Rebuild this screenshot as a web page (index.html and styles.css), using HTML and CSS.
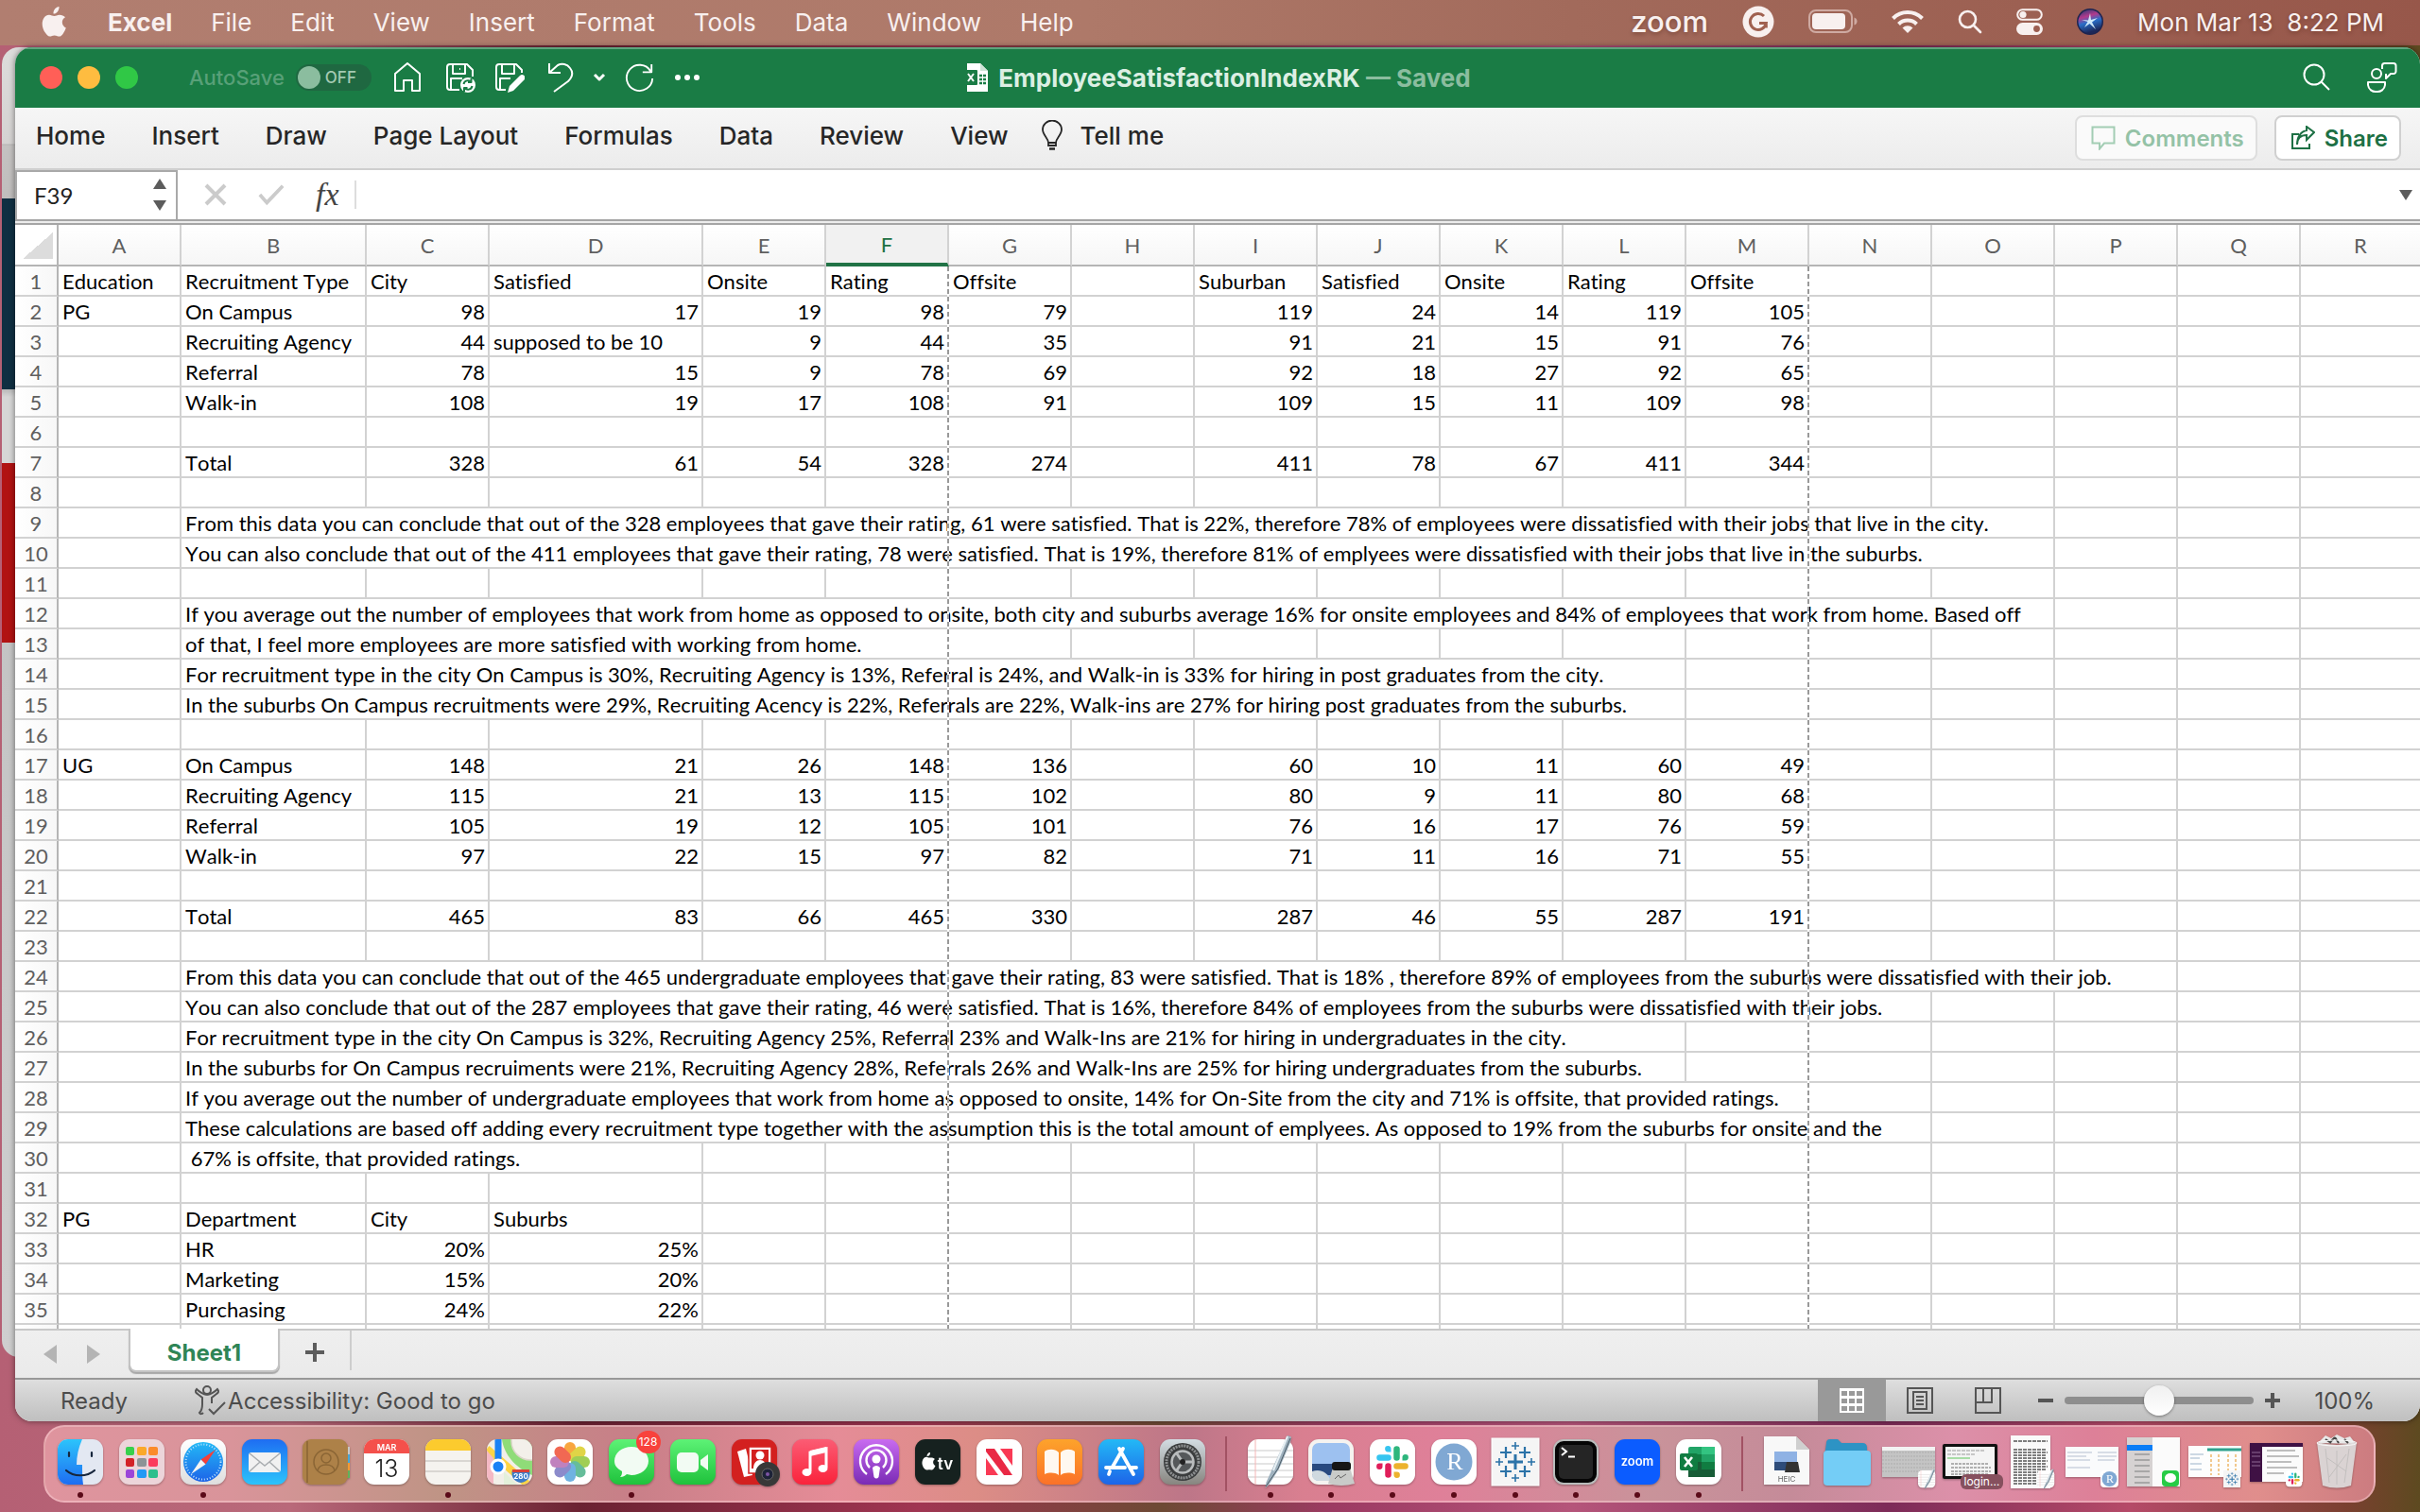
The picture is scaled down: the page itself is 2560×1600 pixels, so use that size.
FILE: index.html
```
<!DOCTYPE html>
<html lang="en">
<head>
<meta charset="utf-8">
<title>EmployeeSatisfactionIndexRK</title>
<link rel="stylesheet" href="styles.css">
</head>
<body>
<header class="menubar">
  <nav class="menus">
    <button class="apple" aria-label="Apple menu"><svg width="26" height="32" viewBox="0 0 26 32"><path fill="#f8f0ef" d="M18.500 0c.2 2.200-.6 4-1.700 5.400-1.100 1.300-2.700 2.200-4.300 2-.2-2 .7-3.900 1.700-5.100C15.300 1 17 .1 18.500 0zM25 11.200c-2 1.200-3.200 3-3.200 5.400 0 2.700 1.600 4.900 4 5.900-.6 1.900-1.500 3.700-2.700 5.400-1.300 1.900-2.500 3.700-4.600 3.700-2 0-2.600-1.200-4.900-1.200s-3 1.200-4.900 1.200c-2 0-3.500-2-4.700-3.800C.7 23.500-.4 17.200 2 12.700 3.300 10.300 5.600 8.800 8 8.800c2.200 0 3.700 1.300 5.500 1.300 1.700 0 2.900-1.300 5.500-1.300 2.300 0 4.600.9 6 2.400z"/></svg></button>
    <button class="app">Excel</button><button>File</button><button>Edit</button><button>View</button><button>Insert</button><button>Format</button><button>Tools</button><button>Data</button><button>Window</button><button>Help</button>
  </nav>
  <div class="status-items">
    <span class="zoomword">zoom</span>
    <svg width="34" height="34" viewBox="0 0 34 34"><circle cx="17" cy="17" r="16.500" fill="#f8f0ef"/><path d="M23 11a8.500 8.500 0 1 0 2.300 7.500H18M25.300 18.500v5" fill="none" stroke="#a0604f" stroke-width="3"/></svg>
    <svg width="52" height="26" viewBox="0 0 52 26"><rect x="1" y="1" width="45" height="23" rx="7" fill="none" stroke="#cfaaa2" stroke-width="2"/><rect x="4" y="4" width="35" height="17" rx="4" fill="#f8f0ef"/><path d="M48.500 8.500q3 1 3 4t-3 4z" fill="#cfaaa2"/></svg>
    <svg width="34" height="26" viewBox="0 0 34 26"><g fill="none" stroke="#f8f0ef" stroke-width="4"><path d="M1.500 9.500a22 22 0 0 1 31 0"/><path d="M7.500 15.500a13.500 13.500 0 0 1 19 0"/></g><path d="M17 25l-5.500-5.500a8 8 0 0 1 11 0z" fill="#f8f0ef"/></svg>
    <svg width="26" height="26" viewBox="0 0 26 26"><g fill="none" stroke="#f8f0ef" stroke-width="2.600" stroke-linecap="round"><circle cx="10.500" cy="10.500" r="8.500"/><path d="M17 17l7 7"/></g></svg>
    <svg width="28" height="28" viewBox="0 0 28 28"><rect x="1.200" y="1.200" width="25.600" height="10.600" rx="5.300" fill="none" stroke="#f8f0ef" stroke-width="2"/><circle cx="7" cy="6.500" r="3.600" fill="#f8f0ef"/><rect y="15" width="28" height="13" rx="6.500" fill="#f8f0ef"/><circle cx="21.500" cy="21.500" r="3.400" fill="#9c5d50"/></svg>
    <svg width="28" height="28" viewBox="0 0 28 28"><defs><linearGradient id="siri" x1="0" y1="0" x2="0.300" y2="1"><stop offset="0" stop-color="#283a76"/><stop offset=".35" stop-color="#b23a8c"/><stop offset=".6" stop-color="#2a6ec8"/><stop offset="1" stop-color="#1c2758"/></linearGradient></defs><circle cx="14" cy="14" r="14" fill="#1d2450"/><circle cx="14" cy="14" r="12.500" fill="url(#siri)"/><path d="M14 5l1 7 7-2-6 4.500L20 22l-6.500-6L8 20l3.500-6L5 12l7 .5z" fill="#dff6ff" opacity=".9"/></svg>
    <time>Mon Mar 13&nbsp; 8:22 PM</time>
  </div>
</header>

<main class="workspace">
  <div class="behind"></div>
  <section class="window">
    <div class="titlebar">
      <div class="lights"><button class="red" aria-label="Close"></button><button class="amber" aria-label="Minimise"></button><button class="green" aria-label="Zoom window"></button></div>
      <label class="autosave" for="autosave">AutoSave <span class="toggle"><input type="checkbox" id="autosave"><span>OFF</span></span></label>
      <div class="quick">
        <button aria-label="Home"><svg width="32" height="34" viewBox="0 0 32 34"><path d="M3 13L16 2l13 11v18h-8V20h-9v11H3z"/></svg></button>
        <button class="spaced" aria-label="Save"><svg width="32" height="34" viewBox="0 0 32 34"><path d="M15 30H5a3 3 0 0 1-3-3V6a3 3 0 0 1 3-3h18l6 6v7M8 3v10h13V3M15 8h1M6 30V18h12"/><circle cx="24" cy="25" r="8" fill="#fff" stroke="none"/><path d="M19.500 24a4.500 4.500 0 0 1 8-2M28.500 26a4.500 4.500 0 0 1-8 2M27.500 18v4h-3.500M20 32v-4h3.500" stroke="#1a7c45"/></svg></button>
        <button aria-label="Save as"><svg width="32" height="34" viewBox="0 0 32 34"><path d="M12 30H5a3 3 0 0 1-3-3V6a3 3 0 0 1 3-3h18l6 6v3M8 3v10h13V3M6 30V18h11"/><path d="M14 33l2-7 11-11a3 3 0 0 1 4.500 4.500L20 31z" fill="#fff" stroke="none"/></svg></button>
        <button class="spaced" aria-label="Undo"><svg width="28" height="34" viewBox="0 0 28 34"><path d="M2 2v10h12M2 12l9-8a10 10 0 0 1 13 3c4 5 2 10-2 14L7 32"/></svg></button>
        <button aria-label="Undo history"><svg width="14" height="10" viewBox="0 0 14 10"><path d="M2 2l5 5 5-5" stroke-width="3"/></svg></button>
        <button aria-label="Redo"><svg width="32" height="34" viewBox="0 0 34 34"><path d="M30 2v9H20M29 10A14.500 14.500 0 1 0 31 18"/></svg></button>
        <button aria-label="More"><svg width="28" height="8" viewBox="0 0 28 8"><g fill="#fff" stroke="none"><circle cx="4" cy="4" r="3"/><circle cx="14" cy="4" r="3"/><circle cx="24" cy="4" r="3"/></g></svg></button>
      </div>
      <h1 class="doc"><svg width="26" height="32" viewBox="0 0 26 32"><path d="M3 1h14l8 8v22H3z" fill="#fff"/><path d="M17 1v8h8z" fill="#cfe3d7"/><rect y="8" width="14" height="16" rx="1" fill="#1a7c45"/><path d="M4 12l6 8M10 12l-6 8" stroke="#fff" stroke-width="2"/><path d="M16 14h3M16 18h3M16 22h3M20 14h3M20 18h3M20 22h3" stroke="#1a7c45" stroke-width="2.500"/></svg><span>EmployeeSatisfactionIndexRK <span class="saved">— Saved</span></span></h1>
      <div class="title-right">
        <button aria-label="Search"><svg width="30" height="30" viewBox="0 0 30 30"><circle cx="12" cy="12" r="10.500"/><path d="M19.500 19.500L28 28"/></svg></button>
        <button aria-label="Presence"><svg width="34" height="34" viewBox="0 0 34 34"><circle cx="12" cy="13" r="5"/><path d="M3 22h18v3a8 8 0 0 1-9 7 8 8 0 0 1-9-7zM18 8V4.500A2.500 2.500 0 0 1 20.500 2H30a2.500 2.500 0 0 1 2.500 2.500v6A2.500 2.500 0 0 1 30 13h-3l-5 5v-5"/></svg></button>
      </div>
    </div>

    <nav class="ribbon">
      <button>Home</button><button>Insert</button><button>Draw</button><button>Page Layout</button><button>Formulas</button><button>Data</button><button>Review</button><button>View</button>
      <button class="tell"><svg width="24" height="32" viewBox="0 0 24 32"><g fill="none" stroke="#262626" stroke-width="1.800"><path d="M8 24c0-5-6-8-6-14a10 9.500 0 0 1 20 0c0 6-6 9-6 14zM8 24v3h8v-3"/><path d="M9 30.500h6" stroke-width="2.500"/></g></svg>Tell me</button>
      <span class="grow"></span>
      <span class="actions">
        <button class="boxed comments" disabled><svg width="26" height="26" viewBox="0 0 26 26"><path d="M1.500 1.500h23v17H14l-5 6v-6H1.500z" fill="none" stroke="#a3cdb4" stroke-width="2"/></svg>Comments</button>
        <button class="boxed"><svg width="26" height="26" viewBox="0 0 26 26"><path d="M9 9H2v15h18v-5M7 20c0-7 4-10 10-10v5l8-8-8-6v4C11 6 7 12 7 20z" fill="none" stroke="#1d7044" stroke-width="2"/></svg>Share</button>
      </span>
    </nav>

    <div class="formula">
      <div class="namebox"><input aria-label="Name box" value="F39"><span class="spin"><i class="up"></i><i class="down"></i></span></div>
      <button aria-label="Cancel"><svg width="24" height="24" viewBox="0 0 24 24"><path d="M2 2l20 20M22 2L2 22" stroke="#cbcbcb" stroke-width="4"/></svg></button>
      <button aria-label="Enter"><svg width="28" height="24" viewBox="0 0 30 24"><path d="M2 12l8 9L28 2" fill="none" stroke="#cbcbcb" stroke-width="4"/></svg></button>
      <button class="fx" aria-label="Insert function">fx</button>
      <input class="entry" aria-label="Formula">
      <i class="down"></i>
    </div>

    <div class="sheet">
      <table>
        <colgroup><col class="rh"><col><col class="cb"><col><col class="cd"><col><col><col><col><col><col><col><col><col><col><col><col><col><col class="rest"></colgroup>
        <thead><tr><th class="corner"></th><th>A</th><th>B</th><th>C</th><th>D</th><th>E</th><th class="active">F</th><th>G</th><th>H</th><th>I</th><th>J</th><th>K</th><th>L</th><th>M</th><th>N</th><th>O</th><th>P</th><th>Q</th><th>R</th></tr></thead>
        <tbody>
        <tr><th>1<td>Education<td>Recruitment Type<td>City<td>Satisfied<td>Onsite<td>Rating<td>Offsite<td><td>Suburban<td>Satisfied<td>Onsite<td>Rating<td>Offsite <td><td><td><td><td>
        <tr class="nums"><th>2<td>PG<td>On Campus<td>98<td>17<td>19<td>98<td>79<td><td>119<td>24<td>14<td>119<td>105 <td><td><td><td><td>
        <tr class="nums"><th>3<td><td>Recruiting Agency<td>44<td class="text">supposed to be 10<td>9<td>44<td>35<td><td>91<td>21<td>15<td>91<td>76 <td><td><td><td><td>
        <tr class="nums"><th>4<td><td>Referral<td>78<td>15<td>9<td>78<td>69<td><td>92<td>18<td>27<td>92<td>65 <td><td><td><td><td>
        <tr class="nums"><th>5<td><td>Walk-in<td>108<td>19<td>17<td>108<td>91<td><td>109<td>15<td>11<td>109<td>98 <td><td><td><td><td>
        <tr><th>6 <td><td><td> <td><td><td> <td><td><td> <td><td><td> <td><td><td> <td><td><td>
        <tr class="nums"><th>7<td><td>Total<td>328<td>61<td>54<td>328<td>274<td><td>411<td>78<td>67<td>411<td>344 <td><td><td><td><td>
        <tr><th>8 <td><td><td> <td><td><td> <td><td><td> <td><td><td> <td><td><td> <td><td><td>
        <tr><th>9<td><td colspan="14">From this data you can conclude that out of the 328 employees that gave their rating, 61 were satisfied. That is 22%, therefore 78% of employees were dissatisfied with their jobs that live in the city. <td><td><td>
        <tr><th>10<td><td colspan="14">You can also conclude that out of the 411 employees that gave their rating, 78 were satisfied. That is 19%, therefore 81% of emplyees were dissatisfied with their jobs that live in the suburbs. <td><td><td>
        <tr><th>11 <td><td><td> <td><td><td> <td><td><td> <td><td><td> <td><td><td> <td><td><td>
        <tr><th>12<td><td colspan="14">If you average out the number of employees that work from home as opposed to onsite, both city and suburbs average 16% for onsite employees and 84% of employees that work from home. Based off <td><td><td>
        <tr><th>13<td><td colspan="5">of that, I feel more employees are more satisfied with working from home. <td><td><td> <td><td><td> <td><td><td> <td><td><td>
        <tr><th>14<td><td colspan="11">For recruitment type in the city On Campus is 30%, Recruiting Agency is 13%, Referral is 24%, and Walk-in is 33% for hiring in post graduates from the city. <td><td><td> <td><td><td>
        <tr><th>15<td><td colspan="11">In the suburbs On Campus recruitments were 29%, Recruiting Acency is 22%, Referrals are 22%, Walk-ins are 27% for hiring post graduates from the suburbs. <td><td><td> <td><td><td>
        <tr><th>16 <td><td><td> <td><td><td> <td><td><td> <td><td><td> <td><td><td> <td><td><td>
        <tr class="nums"><th>17<td>UG<td>On Campus<td>148<td>21<td>26<td>148<td>136<td><td>60<td>10<td>11<td>60<td>49 <td><td><td><td><td>
        <tr class="nums"><th>18<td><td>Recruiting Agency<td>115<td>21<td>13<td>115<td>102<td><td>80<td>9<td>11<td>80<td>68 <td><td><td><td><td>
        <tr class="nums"><th>19<td><td>Referral<td>105<td>19<td>12<td>105<td>101<td><td>76<td>16<td>17<td>76<td>59 <td><td><td><td><td>
        <tr class="nums"><th>20<td><td>Walk-in<td>97<td>22<td>15<td>97<td>82<td><td>71<td>11<td>16<td>71<td>55 <td><td><td><td><td>
        <tr><th>21 <td><td><td> <td><td><td> <td><td><td> <td><td><td> <td><td><td> <td><td><td>
        <tr class="nums"><th>22<td><td>Total<td>465<td>83<td>66<td>465<td>330<td><td>287<td>46<td>55<td>287<td>191 <td><td><td><td><td>
        <tr><th>23 <td><td><td> <td><td><td> <td><td><td> <td><td><td> <td><td><td> <td><td><td>
        <tr><th>24<td><td colspan="15">From this data you can conclude that out of the 465 undergraduate employees that gave their rating, 83 were satisfied. That is 18% , therefore 89% of employees from the suburbs were dissatisfied with their job. <td><td>
        <tr><th>25<td><td colspan="13">You can also conclude that out of the 287 employees that gave their rating, 46 were satisfied. That is 16%, therefore 84% of employees from the suburbs were dissatisfied with their jobs. <td><td><td><td>
        <tr><th>26<td><td colspan="11">For recruitment type in the city On Campus is 32%, Recruiting Agency 25%, Referral 23% and Walk-Ins are 21% for hiring in undergraduates in the city. <td><td><td> <td><td><td>
        <tr><th>27<td><td colspan="11">In the suburbs for On Campus recruiments were 21%, Recruiting Agency 28%, Referrals 26% and Walk-Ins are 25% for hiring undergraduates from the suburbs. <td><td><td> <td><td><td>
        <tr><th>28<td><td colspan="12">If you average out the number of undergraduate employees that work from home as opposed to onsite, 14% for On-Site from the city and 71% is offsite, that provided ratings. <td><td><td><td><td>
        <tr><th>29<td><td colspan="13">These calculations are based off adding every recruitment type together with the assumption this is the total amount of emplyees. As opposed to 19% from the suburbs for onsite and the <td><td><td><td>
        <tr><th>30<td><td colspan="3">&nbsp;67% is offsite, that provided ratings. <td><td> <td><td><td> <td><td><td> <td><td><td> <td><td><td>
        <tr><th>31 <td><td><td> <td><td><td> <td><td><td> <td><td><td> <td><td><td> <td><td><td>
        <tr><th>32<td>PG<td>Department<td>City<td>Suburbs <td><td> <td><td><td> <td><td><td> <td><td><td> <td><td><td>
        <tr class="nums"><th>33<td><td>HR<td>20%<td>25% <td><td> <td><td><td> <td><td><td> <td><td><td> <td><td><td>
        <tr class="nums"><th>34<td><td>Marketing<td>15%<td>20% <td><td> <td><td><td> <td><td><td> <td><td><td> <td><td><td>
        <tr class="nums"><th>35<td><td>Purchasing<td>24%<td>22% <td><td> <td><td><td> <td><td><td> <td><td><td> <td><td><td>
        <tr><th> <td><td><td> <td><td><td> <td><td><td> <td><td><td> <td><td><td> <td><td><td>
        </tbody>
      </table>
      <i class="pagebreak first"></i><i class="pagebreak second"></i>
    </div>

    <div class="tabs">
      <button aria-label="Previous sheet"><i class="left"></i></button><button aria-label="Next sheet"><i class="right"></i></button>
      <button class="tab">Sheet1</button>
      <button class="add" aria-label="Add sheet"><svg width="22" height="22" viewBox="0 0 22 22"><path d="M11 1v20M1 11h20" stroke="#5c5c5c" stroke-width="4"/></svg></button>
    </div>

    <footer class="statusbar">
      <span class="ready">Ready</span>
      <button class="access"><svg width="34" height="32" viewBox="0 0 34 32"><g fill="none" stroke="#555" stroke-width="2"><circle cx="14" cy="5" r="4"/><path d="M14 10C9 9 6 7 3 4c-2 2-1 4 1 5l5 4v7c0 4-1 7-3 9 1 2 3 1 4 0M14 10c5-1 8-3 11-6 2 2 1 4-1 5l-5 4v6M16 25l5 5L33 18"/></g></svg>Accessibility: Good to go</button>
      <span class="grow"></span>
      <button class="view on" aria-label="Normal"><svg width="28" height="28" viewBox="0 0 28 28"><rect x="1" y="1" width="26" height="26" fill="#fff"/><path d="M3 4h6v5H3zM11 4h6v5h-6zM19 4h6v5h-6zM3 12h6v5H3zM11 12h6v5h-6zM19 12h6v5h-6zM3 20h6v5H3zM11 20h6v5h-6zM19 20h6v5h-6z" fill="#999"/></svg></button>
      <button class="view" aria-label="Page layout"><svg width="28" height="28" viewBox="0 0 28 28"><path d="M1 1h26v26H1zM7 5h14v18H7zM10 10h8M10 14h8M10 18h8" fill="none" stroke="#555" stroke-width="2"/></svg></button>
      <button class="view" aria-label="Page break"><svg width="28" height="28" viewBox="0 0 28 28"><path d="M1 1h26v26H1zM1 16h17V1M9 1v15" fill="none" stroke="#555" stroke-width="2"/></svg></button>
      <div class="zoomer">
        <button aria-label="Zoom out"><svg width="16" height="16" viewBox="0 0 16 16"><path d="M0 8h16" stroke="#555" stroke-width="4"/></svg></button>
        <input type="range" aria-label="Zoom" min="0" max="100" value="50">
        <button aria-label="Zoom in"><svg width="16" height="16" viewBox="0 0 16 16"><path d="M0 8h16M8 0v16" stroke="#555" stroke-width="4"/></svg></button>
      </div>
      <span class="percent">100%</span>
    </footer>
  </section>
</main>

<nav class="dock">
  <svg width="0" height="0" class="defs"><defs>
    <linearGradient id="blue" x1="0" y1="0" x2="0" y2="1"><stop offset="0" stop-color="#1e6df2"/><stop offset="1" stop-color="#2cc4fb"/></linearGradient>
    <linearGradient id="finder" x1="0" y1="0" x2="0" y2="1"><stop offset="0" stop-color="#2cc4fb"/><stop offset="1" stop-color="#1e6df2"/></linearGradient>
    <linearGradient id="blue2" x1="0" y1="0" x2="0" y2="1"><stop offset="0" stop-color="#23b9f6"/><stop offset="1" stop-color="#1d64e8"/></linearGradient>
    <linearGradient id="green" x1="0" y1="0" x2="0" y2="1"><stop offset="0" stop-color="#5df276"/><stop offset="1" stop-color="#1fc23c"/></linearGradient>
    <linearGradient id="music" x1="0" y1="0" x2="0" y2="1"><stop offset="0" stop-color="#fb5c74"/><stop offset="1" stop-color="#fa233b"/></linearGradient>
    <linearGradient id="purple" x1="0" y1="0" x2="0" y2="1"><stop offset="0" stop-color="#c86bf0"/><stop offset="1" stop-color="#7a2bb5"/></linearGradient>
    <linearGradient id="orange" x1="0" y1="0" x2="0" y2="1"><stop offset="0" stop-color="#fda32b"/><stop offset="1" stop-color="#fb7128"/></linearGradient>
    <linearGradient id="silver" x1="0" y1="0" x2="0" y2="1"><stop offset="0" stop-color="#d3dde3"/><stop offset="1" stop-color="#87857f"/></linearGradient>
    <linearGradient id="paper" x1="0" y1="0" x2="0" y2="1"><stop offset="0" stop-color="#fff"/><stop offset="1" stop-color="#dedede"/></linearGradient>
    <g id="slack"><g stroke-width="6.500" stroke-linecap="round"><path d="M10.500 19.500h9" stroke="#36c5f0"/><path d="M28.500 10.500v9" stroke="#2eb67d"/><path d="M28.500 28.500h9" stroke="#ecb22e"/><path d="M19.500 28.500v9" stroke="#e01e5a"/></g><path d="M22.500 13.500h-3a3.200 3.200 0 1 1 3-3z" fill="#36c5f0"/><path d="M34.500 22.500v-3a3.200 3.200 0 1 1 3 3z" fill="#2eb67d"/><path d="M25.500 34.500h3a3.200 3.200 0 1 1-3 3z" fill="#ecb22e"/><path d="M13.500 25.500v3a3.200 3.200 0 1 1-3-3z" fill="#e01e5a"/></g>
    <g id="tableau" stroke="#2c73a8"><path d="M24 16v16M16 24h16" stroke-width="3"/><path d="M14 8v12M8 14h12M34 8v12M28 14h12M14 28v12M8 34h12M34 28v12M28 34h12" stroke-width="2.200"/><path d="M24 3v8M20 7h8M24 37v8M20 41h8M7 20v8M3 24h8M41 20v8M37 24h8" stroke-width="1.600"/></g>
    <g id="pen"><path d="M42-4l4 1.500-1 6-12 28-11 17-3.500 3 1-6 9-20z" fill="#9fb2bf"/><path d="M42-3L27 33" stroke="#e8f0f4" stroke-width="2"/><path d="M45-1L32 31 19 50" stroke="#4b5a65" stroke-width="1" fill="none"/></g>
    <g id="lines" stroke="#c9c9c9"><path d="M0 12h48M0 19h48M0 26h48M0 33h48M0 40h48"/><path d="M8 0v48" stroke="#f5b5b5"/></g>
  </defs></svg>
  <a href="#" class="run" aria-label="Finder"><svg viewBox="0 0 48 48"><rect width="48" height="48" rx="11" fill="#e3e8f2"/><path d="M11 0h15c-4 9-6 18-6 27h6c0 8 0 14 1 21H11A11 11 0 0 1 0 37V11A11 11 0 0 1 11 0z" fill="url(#finder)"/><path d="M12 14v4M36 14v4M9 33c8 7 22 7 30 0" stroke="#17263c" stroke-width="2.200" stroke-linecap="round" fill="none"/></svg></a>
  <a href="#" aria-label="Launchpad"><svg viewBox="0 0 48 48"><rect width="48" height="48" rx="11" fill="#ecd5da"/><g><rect x="7" y="8" width="9" height="9" rx="2" fill="#38d04c"/><rect x="19" y="8" width="10" height="9" rx="2" fill="#fba82a"/><rect x="31" y="8" width="10" height="9" rx="2" fill="#fb8b2b"/><rect x="7" y="20" width="9" height="9" rx="2" fill="#d32227"/><rect x="19" y="20" width="10" height="9" rx="2" fill="#8d9396"/><rect x="31" y="20" width="10" height="9" rx="2" fill="#fb3c5c"/><rect x="7" y="32" width="9" height="9" rx="2" fill="#9b45d8"/><rect x="19" y="32" width="10" height="9" rx="2" fill="#2299f5"/><rect x="31" y="32" width="10" height="9" rx="2" fill="#2cbf8d"/></g></svg></a>
  <a href="#" class="run" aria-label="Safari"><svg viewBox="0 0 48 48"><rect width="48" height="48" rx="11" fill="url(#paper)"/><circle cx="24" cy="24" r="21" fill="url(#blue2)"/><circle cx="24" cy="24" r="18.500" fill="none" stroke="#bfe3fb" stroke-width="2" stroke-dasharray="1 2"/><path d="M37 11L26.500 26.500l-5-5z" fill="#f5403a"/><path d="M11 37l10.500-15.500 5 5z" fill="#f4f4f4"/></svg></a>
  <a href="#" aria-label="Mail"><svg viewBox="0 0 48 48"><rect width="48" height="48" rx="11" fill="url(#blue)"/><rect x="7" y="14" width="34" height="21" rx="3" fill="#f1f1f1"/><path d="M8 15l16 13 16-13M8 34l11-10M40 34L29 24" fill="none" stroke="#a9adb0" stroke-width="1.500"/></svg></a>
  <a href="#" aria-label="Contacts"><svg viewBox="0 0 48 48"><path d="M40 8h10v8H40z" fill="#c8c8c8"/><path d="M40 16h10v9H40z" fill="#44a7d8"/><path d="M40 25h10v8H40z" fill="#f39a32"/><path d="M40 33h10v8H40z" fill="#5fb35a"/><rect width="48" height="48" rx="9" fill="#ad8148"/><g fill="none" stroke="#8a6535" stroke-width="1.500"><circle cx="25" cy="24" r="13"/><circle cx="25" cy="20" r="5"/><path d="M16 33c2-8 16-8 18 0"/><path d="M5 2v44"/></g></svg></a>
  <a href="#" aria-label="Calendar"><svg viewBox="0 0 48 48"><rect width="48" height="48" rx="11" fill="#fff"/><path d="M0 15v-4A11 11 0 0 1 11 0h26a11 11 0 0 1 11 11v4z" fill="#f4504b"/><text x="24" y="12" class="mar">MAR</text><text x="24" y="40" class="thirteen">13</text></svg></a>
  <a href="#" class="run" aria-label="Notes"><svg viewBox="0 0 48 48"><rect width="48" height="48" rx="11" fill="#f5f3ef"/><path d="M0 12v-1A11 11 0 0 1 11 0h26a11 11 0 0 1 11 11v1z" fill="#fccb2e"/><path d="M0 23h48M0 34h48" stroke="#cfcdc9" stroke-width="1.500"/></svg></a>
  <a href="#" aria-label="Maps"><svg viewBox="0 0 48 48"><clipPath id="mc"><rect width="48" height="48" rx="11"/></clipPath><g clip-path="url(#mc)"><rect width="48" height="48" fill="#f2efe8"/><path d="M16 0h32v38C30 30 18 16 16 0z" fill="#8fdc78"/><circle cx="46" cy="2" r="20" fill="#f3f0ea" stroke="#dcd6ca" stroke-width="1.500"/><path d="M0 10l48 42" stroke="#fcd445" stroke-width="8"/><path d="M0 12v36h7V20z" fill="#f4b9c4"/><path d="M18 34l14 14H18z" fill="#e3f0da"/><path d="M12-2v28" stroke="#1b82f5" stroke-width="7"/></g><circle cx="12" cy="29" r="7" fill="#1b82f5" stroke="#fff" stroke-width="3"/><path d="M27 32h18c2 8-2 13-9 14-7-1-11-6-9-14z" fill="#3b7bc9"/><path d="M27 32h18v3H27z" fill="#d9423a"/><text x="36" y="42" class="shield">280</text></svg></a>
  <a href="#" aria-label="Photos"><svg viewBox="0 0 48 48"><rect width="48" height="48" rx="11" fill="#fff"/><g transform="translate(24 24)" opacity=".88"><rect x="-6" y="-21" width="12" height="20" rx="6" fill="#f89a26"/><rect x="-6" y="-21" width="12" height="20" rx="6" fill="#dccf2e" transform="rotate(45)"/><rect x="-6" y="-21" width="12" height="20" rx="6" fill="#93c83e" transform="rotate(90)"/><rect x="-6" y="-21" width="12" height="20" rx="6" fill="#51b58d" transform="rotate(135)"/><rect x="-6" y="-21" width="12" height="20" rx="6" fill="#5ca8de" transform="rotate(180)"/><rect x="-6" y="-21" width="12" height="20" rx="6" fill="#7d7cc4" transform="rotate(225)"/><rect x="-6" y="-21" width="12" height="20" rx="6" fill="#b870b6" transform="rotate(270)"/><rect x="-6" y="-21" width="12" height="20" rx="6" fill="#f0543c" transform="rotate(315)"/></g></svg></a>
  <a href="#" class="run" aria-label="Messages"><svg viewBox="0 0 48 48"><rect width="48" height="48" rx="11" fill="url(#green)"/><path d="M24 8c10 0 18 6.500 18 15s-8 15-18 15l-5-1c-2 2-4 3-7 3 2-2 2-4 2-6-5-3-8-6-8-11C6 14.500 14 8 24 8z" fill="#f2fbf3"/></svg><span class="badge">128</span></a>
  <a href="#" aria-label="FaceTime"><svg viewBox="0 0 48 48"><rect width="48" height="48" rx="11" fill="url(#green)"/><rect x="7" y="14" width="23" height="21" rx="5" fill="#f2fbf3"/><path d="M32 22l8-6v17l-8-6z" fill="#f2fbf3"/></svg></a>
  <a href="#" aria-label="Photo Booth"><svg viewBox="0 0 48 48"><rect width="48" height="48" rx="11" fill="#d3201f"/><path d="M6 13l9-3 7 28-9 2z" fill="#fff"/><path d="M18 8h24v28H18z" fill="#fff" stroke="#d3201f" stroke-width="1.500"/><path d="M21 11h18v20H21z" fill="#d3201f"/><circle cx="30" cy="17" r="4.500" fill="#fff"/><path d="M23 31c0-12 14-12 14 0z" fill="#fff"/><circle cx="38" cy="37" r="13" fill="#383838"/><circle cx="38" cy="37" r="6" fill="#1d2238" stroke="#666"/><circle cx="38" cy="37" r="2" fill="#7d54a4"/></svg></a>
  <a href="#" aria-label="Music"><svg viewBox="0 0 48 48"><rect width="48" height="48" rx="11" fill="url(#music)"/><path d="M19 34V14l17-4v20" fill="none" stroke="#fff" stroke-width="3"/><path d="M19 12l17-4v6l-17 4z" fill="#fff"/><ellipse cx="15.500" cy="35" rx="5" ry="4" fill="#fff"/><ellipse cx="32.500" cy="31" rx="5" ry="4" fill="#fff"/></svg></a>
  <a href="#" aria-label="Podcasts"><svg viewBox="0 0 48 48"><rect width="48" height="48" rx="11" fill="url(#purple)"/><g fill="none" stroke="#fff" stroke-width="2.400"><path d="M14 37a17 17 0 1 1 20 0"/><path d="M17 30a10.500 10.500 0 1 1 14 0"/></g><circle cx="24" cy="21" r="4.500" fill="#fff"/><path d="M20 30q4-4 8 0l-1.500 10q-2.500 3-5 0z" fill="#fff"/></svg></a>
  <a href="#" aria-label="TV"><svg viewBox="0 0 48 48"><rect width="48" height="48" rx="11" fill="#16211f"/><path d="M16 14c0 3-1.500 4-3.500 4 0-2 1.500-4 3.500-4zM21 21c-3 2-2 6 .5 7-1 3-3 5-4.500 4.500s-2-.5-4 0C10 33 7 28 7.500 24s4-6 6-4.800 4-1.200 7.500 1.800z" fill="#fff"/><text x="32" y="32" class="tv">tv</text></svg></a>
  <a href="#" aria-label="News"><svg viewBox="0 0 48 48"><rect width="48" height="48" rx="11" fill="#fff"/><path d="M25 10h13v18zM10 20l13 18H10z" fill="#f93a55"/><path d="M10 10h9l19 28h-9L10 13z" fill="#e92945"/></svg></a>
  <a href="#" aria-label="Books"><svg viewBox="0 0 48 48"><rect width="48" height="48" rx="11" fill="url(#orange)"/><path d="M23 14c-4-4-11-4-15-1v24c5-2 11-2 15 1zM25 14c4-4 11-4 15-1v24c-5-2-11-2-15 1z" fill="#fff8f0"/></svg></a>
  <a href="#" aria-label="App Store"><svg viewBox="0 0 48 48"><rect width="48" height="48" rx="11" fill="url(#blue2)"/><g stroke="#fff" stroke-width="3.800" stroke-linecap="round"><path d="M22 10l15 27M26 10L15 29M12 34l-1 3M8 30h20M34 30h6"/></g></svg></a>
  <a href="#" aria-label="System Preferences"><svg viewBox="0 0 48 48"><rect width="48" height="48" rx="11" fill="url(#silver)"/><circle cx="24" cy="24" r="20" fill="#3b3d3e"/><circle cx="24" cy="24" r="17" fill="none" stroke="#8d9091" stroke-width="3" stroke-dasharray="2 1"/><circle cx="24" cy="24" r="11.500" fill="#55585a" stroke="#b9bcbd" stroke-width="2.500"/><path d="M24 24h12M24 24l-7-10M24 24l-7 10" stroke="#b9bcbd" stroke-width="3"/><circle cx="24" cy="24" r="3" fill="#222"/></svg></a>
  <hr>
  <a href="#" class="run" aria-label="TextEdit"><svg viewBox="0 0 48 48"><rect width="48" height="48" rx="11" fill="#fff"/><use href="#lines"/><use href="#pen"/></svg></a>
  <a href="#" class="run" aria-label="Preview"><svg viewBox="0 0 48 48"><rect width="48" height="48" rx="11" fill="#f5f3f0"/><rect x="4" y="4" width="40" height="40" rx="7" fill="#9dc1f0"/><path d="M4 26h40v12H4z" fill="#28497f"/><path d="M4 34c8-3 16 0 20 10H11a7 7 0 0 1-7-7z" fill="#cfd9df"/><path d="M26 30h18l5 17q-14 4-28 0z" fill="#c9cbc9"/><rect x="25" y="24" width="20" height="9" rx="3" fill="#161616"/><path d="M28 42l4-4 2 3 6-4" stroke="#666" fill="none"/></svg></a>
  <a href="#" class="run" aria-label="Slack"><svg viewBox="0 0 48 48"><rect width="48" height="48" rx="11" fill="#fff"/><use href="#slack"/></svg></a>
  <a href="#" class="run" aria-label="RStudio"><svg viewBox="0 0 48 48"><rect width="48" height="48" rx="11" fill="#fff"/><circle cx="24" cy="24" r="19.500" fill="#80a8d3"/><text x="25" y="32" class="rlogo">R</text></svg></a>
  <a href="#" class="run" aria-label="Tableau"><svg viewBox="0 0 48 48"><rect x="-1" y="-1" width="50" height="50" fill="#f5f5f5" stroke="#fff"/><use href="#tableau"/></svg></a>
  <a href="#" class="run" aria-label="Terminal"><svg viewBox="0 0 48 48"><rect width="48" height="48" rx="11" fill="#b9bcbb"/><rect x="2" y="2" width="44" height="44" rx="9" fill="#050505"/><rect x="6" y="6" width="36" height="36" rx="5" fill="#252525"/><path d="M9 9l5 4-5 4M16 18.500h7" stroke="#fff" stroke-width="2" fill="none"/></svg></a>
  <a href="#" class="run" aria-label="Zoom"><svg viewBox="0 0 48 48"><rect width="48" height="48" rx="11" fill="#0b5cff"/><text x="24" y="28" class="zm">zoom</text></svg></a>
  <a href="#" class="run" aria-label="Excel"><svg viewBox="0 0 48 48"><rect width="48" height="48" rx="11" fill="#fff"/><rect x="13" y="8" width="28" height="32" rx="2" fill="#21a366"/><path d="M27 8h14v8H27z" fill="#33c481"/><path d="M13 16h14v8H13z" fill="#107c41"/><path d="M27 24h14v8H27z" fill="#107c41"/><path d="M13 24h14v16H13zM27 32h14v8H27z" fill="#185c37"/><rect x="4" y="15" width="19" height="18" rx="2" fill="#107c41"/><path d="M9 19l8 10M17 19L9 29" stroke="#fff" stroke-width="2.600"/></svg></a>
  <hr>
  <a href="#" aria-label="HEIC file"><svg viewBox="0 0 48 48"><path d="M0-2h34l14 14v37H0z" transform="translate(0 -1)" fill="#f8f8f8"/><path d="M34-3v14h14z" fill="#cfcfcf"/><rect x="11" y="13" width="24" height="20" fill="#8fb2e4"/><path d="M11 24h24v9H11z" fill="#2e4c7a"/><path d="M24 24h12l2 11H22z" fill="#333"/><text x="24" y="45" class="heic">HEIC</text></svg></a>
  <a href="#" aria-label="Folder"><svg viewBox="0 0 48 48"><path d="M2 4q0-4 4-4h8l4 4h22q5 0 5 5v10H0z" fill="#2d93c4"/><rect x="-1" y="12" width="50" height="37" rx="4" fill="#74cdf6"/></svg></a>
  <a href="#" aria-label="Document window"><svg viewBox="0 0 48 48"><rect x="-4" y="8" width="56" height="32" fill="#c4c4c4"/><rect x="-4" y="8" width="56" height="4" fill="#f3f3f3"/><path d="M-4 14h56M-4 18h56M-4 22h56M-4 26h56M-4 30h56M-4 34h56" stroke="#adadad" stroke-dasharray="2 1"/><g transform="translate(34 33) scale(.38)"><rect width="48" height="48" rx="11" fill="#fff"/><use href="#lines"/><use href="#pen"/></g></svg></a>
  <a href="#" aria-label="Login window"><svg viewBox="0 0 48 48"><rect x="-5" y="5" width="58" height="37" rx="2" fill="#111"/><rect x="-2" y="8" width="52" height="31" fill="#f4f4f4"/><path d="M0 12h40M0 16h30" stroke="#999" stroke-dasharray="4 1"/><path d="M0 20h24" stroke="#5ec45a"/><path d="M4 26h40M4 30h42M4 34h42M4 37h40" stroke="#999" stroke-width="1.500" stroke-dasharray="3 1"/></svg><span class="chip">login…</span></a>
  <a href="#" aria-label="Essay window"><svg viewBox="0 0 48 48"><rect x="2" y="-4" width="42" height="56" fill="#fafafa"/><path d="M5 2h36M5 11h34M5 14h36M5 17h34M5 20h35M5 23h36M5 26h34M5 29h36M5 32h35M5 35h30M5 38h32M5 41h28M5 44h30M5 47h24" stroke="#555" stroke-width="1.500" stroke-dasharray="4 1"/><g transform="translate(30 33) scale(.38)"><rect width="48" height="48" rx="11" fill="#fff"/><use href="#lines"/><use href="#pen"/></g></svg></a>
  <a href="#" aria-label="RStudio window"><svg viewBox="0 0 48 48"><rect x="-4" y="8" width="56" height="32" fill="#fafbfc"/><path d="M-2 14h26M-2 18h20M-2 22h24M30 14h20M30 18h20M30 22h18M-2 30h24" stroke="#b4bfd0"/><rect x="33" y="33" width="19" height="18" rx="4" fill="#fff"/><circle cx="42.500" cy="42" r="8" fill="#80a8d3"/><text x="43" y="46" class="rsmall">R</text></svg></a>
  <a href="#" aria-label="Messages window"><svg viewBox="0 0 48 48"><rect x="-4" y="-2" width="56" height="52" fill="#fbfbfb"/><rect x="-4" y="-2" width="27" height="52" fill="#d6d2d2"/><rect x="-4" y="6" width="27" height="6" fill="#0a7df6"/><path d="M4 16h16M4 22h16M4 28h16M4 34h16M4 40h16M4 46h16" stroke="#999" stroke-width="1.500"/><rect x="33" y="33" width="18" height="17" rx="4" fill="#27cc46"/><ellipse cx="42" cy="41" rx="6" ry="5" fill="#fff"/></svg></a>
  <a href="#" aria-label="Tableau window"><svg viewBox="0 0 48 48"><rect x="-4" y="7" width="56" height="33" fill="#fdfdfd"/><path d="M16 11h36" stroke="#2ea18d" stroke-width="3"/><path d="M-2 16h14M-2 20h10M-2 26h12M-2 32h12" stroke="#9cb3c9"/><path d="M20 16v22M28 16v22M38 16v22M46 16v22" stroke="#f1c98e" stroke-dasharray="3 2" stroke-width="2"/><rect x="33" y="33" width="18" height="18" fill="#f5f5f5"/><g transform="translate(34 34) scale(.34)"><use href="#tableau"/></g></svg></a>
  <a href="#" aria-label="Slack window"><svg viewBox="0 0 48 48"><rect x="-4" y="4" width="56" height="41" fill="#fbfbfb"/><path d="M-4 4h56v4H9v37H-4z" fill="#3f1144"/><path d="M-2 14h9M-2 18h9M-2 24h9M-2 28h9" stroke="#8f6a94"/><path d="M14 12h30M14 18h34M14 24h26M14 30h32M14 36h18" stroke="#aaa" stroke-width="1.500"/><g transform="translate(34 33) scale(.36)"><rect width="48" height="48" rx="11" fill="#fff"/><use href="#slack"/></g></svg></a>
  <a href="#" aria-label="Trash"><svg viewBox="0 0 48 48"><path d="M4 4l8-8 6 3 6-4 8 4 6-2 6 8z" fill="#e8e8e8"/><path d="M12 0l6 4M22-2l4 6M32 0l4 4M17 3l5-5" stroke="#444" stroke-width="2"/><path d="M3 3q21 6 42 0l-6 46q-15 5-30 0z" fill="#dfdcdb" opacity=".93"/><path d="M12 10l4 36M24 12v36M37 10l-5 36M14 20l20 14M34 16L16 40" stroke="#c2bfbe" fill="none"/><ellipse cx="24" cy="4" rx="21" ry="3" fill="none" stroke="#f8f8f8"/></svg></a>
</nav>
</body>
</html>
```
FILE: styles.css
```
* { box-sizing: border-box; }
html, body { height: 100%; }
body {
  margin: 0;
  display: flex;
  flex-direction: column;
  overflow: hidden;
  font-family: Inter, "Liberation Sans", sans-serif;
  background: linear-gradient(90deg, #b56074 0, #b9697a 12%, #6b2232 24%, #a03552 38%, #6d4a34 48%, #9c3a62 55%, #b5557a 65%, #7d2b58 78%, #b54a68 88%, #7a4030 97%, #5d4a20 100%);
}
button {
  margin: 0;
  padding: 0;
  border: 0;
  background: none;
  font: inherit;
  color: inherit;
  display: flex;
  align-items: center;
  justify-content: center;
  white-space: nowrap;
}
input { margin: 0; border: 0; font: inherit; outline: 0; }
.grow { flex: 1; }

/* Menu bar */
.menubar {
  flex: none;
  height: 48px;
  display: flex;
  align-items: center;
  justify-content: space-between;
  padding: 0 38px 2px 44px;
  background: linear-gradient(90deg, #b17e70 0, #ae7969 45%, #a26a5b 65%, #97574a 100%);
  color: #f8f0ef;
  font-size: 26px;
  text-shadow: 0 2px 4px rgba(60, 20, 10, .35);
}
.menus { display: flex; align-items: center; gap: 41px; }
.app { font-weight: 700; margin-left: 3px; }
.status-items { display: flex; align-items: center; gap: 36px; }
.zoomword { font-size: 31px; font-weight: 500; line-height: 32px; }

/* Window */
.workspace {
  flex: 1;
  min-height: 0;
  position: relative;
  padding: 2px 0 0 16px;
  display: flex;
}
.behind {
  position: absolute;
  left: 2px;
  top: 2px;
  bottom: 68px;
  width: 60px;
  border-radius: 18px;
  background: linear-gradient(#dddcdb 0, #d5d3d2 102px, #b5b3b2 103px, #c4c2c1 104px, #c0bebd 160px, #102f42 160px, #102f42 362px, #b9b9b9 362px, #d6d6d6 370px, #d6d6d6 440px, #b11312 440px, #b11312 630px, #c4c4c4 630px, #cfcfcf 100%);
}
.window {
  position: relative;
  flex: 1;
  min-width: 0;
  display: flex;
  flex-direction: column;
  border-radius: 18px;
  overflow: hidden;
  background: #fff;
  box-shadow: 0 0 6px rgba(0, 0, 0, .5);
}
.titlebar {
  flex: none;
  height: 64px;
  display: flex;
  align-items: center;
  position: relative;
  padding: 0 24px 2px 26px;
  background: #1a7c45;
  border-top: 2px solid #5fa37e;
}
.lights { display: flex; gap: 16px; }
.lights button { width: 24px; height: 24px; border-radius: 50%; }
.red { background: #ff5f57; }
.amber { background: #febc40; }
.green { background: #30c846; }
.autosave {
  display: flex;
  align-items: center;
  gap: 12px;
  margin-left: 54px;
  font-size: 22px;
  font-weight: 500;
  color: #58a078;
}
.toggle { display: grid; align-items: center; }
.toggle > * { grid-area: 1 / 1; }
.toggle input {
  appearance: none;
  width: 80px;
  height: 28px;
  border-radius: 14px;
  background: #1f6841;
}
.toggle input::before {
  content: "";
  display: block;
  width: 24px;
  height: 24px;
  margin: 2px;
  border-radius: 50%;
  background: #8bbd9f;
}
.toggle span { font-size: 17px; text-align: right; padding-right: 16px; color: #a3c9b2; }
.quick { display: flex; align-items: center; gap: 20px; margin-left: 22px; }
.quick svg, .title-right svg { fill: none; stroke: #fff; stroke-width: 2; stroke-linejoin: round; }
.spaced { margin-left: 4px; }
.doc {
  position: absolute;
  left: 0;
  right: 0;
  display: flex;
  justify-content: center;
  align-items: center;
  gap: 10px;
  margin: 0;
  font-size: 26px;
  font-weight: 700;
  color: #dcefe3;
  pointer-events: none;
}
.saved { color: #8bbd9f; }
.title-right { display: flex; gap: 36px; margin-left: auto; }

.ribbon {
  flex: none;
  height: 66px;
  display: flex;
  align-items: center;
  gap: 49px;
  padding: 0 20px 6px 22px;
  background: linear-gradient(#f6f6f6, #ececec);
  border-bottom: 2px solid #cfcfcf;
  font-size: 26px;
  font-weight: 500;
  color: #262626;
}
.tell { gap: 18px; margin-left: -15px; }
.actions { display: flex; gap: 18px; padding-top: 6px; }
.boxed {
  height: 48px;
  padding: 0 12px 0 15px;
  gap: 10px;
  border: 2px solid #d0d0d0;
  border-radius: 8px;
  background: #fff;
  font-size: 24px;
  font-weight: 600;
  color: #1d7044;
}
.comments { color: #94c2a6; background: #fafafa; border-color: #dedede; }

.formula {
  flex: none;
  height: 58px;
  display: flex;
  align-items: center;
  padding: 0 8px 4px 0;
  border-bottom: 2px solid #a5a5a5;
  background: linear-gradient(#fff 52px, #a5a5a5 52px, #a5a5a5 54px, #ececec 54px);
}
.namebox {
  width: 172px;
  height: 52px;
  display: flex;
  align-items: center;
  padding: 0 10px 2px 18px;
  margin-right: 28px;
  border: 2px solid #a9a9a9;
  border-bottom: 0;
}
.namebox input { flex: 1; min-width: 0; padding: 0; font: 24px Lato, "Liberation Sans", sans-serif; color: #222; }
.spin { display: grid; gap: 12px; }
.up, .down, .left, .right { display: block; border: 7px solid transparent; }
.up { border-top: 0; border-bottom: 11px solid #5c5c5c; }
.down { border-bottom: 0; border-top: 11px solid #5c5c5c; }
.left { border: 10px solid transparent; border-left: 0; border-right: 14px solid #b4b4b4; }
.right { border: 10px solid transparent; border-right: 0; border-left: 14px solid #b4b4b4; }
.formula button { margin-right: 33px; }
.formula .fx { font: italic 34px "Liberation Serif", serif; color: #444; margin-right: 16px; }
.entry { flex: 1; height: 30px; margin-right: 20px; border-left: 2px solid #ddd; background: #fff; font-size: 24px; }

/* Grid */
.sheet {
  position: relative;
  flex: 1;
  min-height: 0;
  overflow: hidden;
  font-family: Lato, "Liberation Sans", sans-serif;
  font-size: 22px;
  font-kerning: none;
  font-variant-ligatures: none;
}
table { width: 100%; table-layout: fixed; border-collapse: separate; border-spacing: 0; }
col { width: 130px; }
.rh { width: 46px; }
.cb { width: 196px; }
.cd { width: 226px; }
.rest { width: auto; }
td, th {
  height: 32px;
  padding: 2px 3px 0 4px;
  line-height: 28px;
  border: 0 solid #d2d2d2;
  border-width: 0 2px 2px 0;
  white-space: nowrap;
  text-align: left;
  color: #000;
}
th { padding: 2px 0 0; font-weight: 400; color: #5f5f5f; text-align: center; }
tbody th { border-right-color: #b5b5b5; background: linear-gradient(90deg, #fff, #f7f7f7); }
thead th { height: 44px; border-bottom-color: #b5b5b5; background: linear-gradient(#fff, #f6f6f6); }
.corner { border-right-color: #b5b5b5; background: linear-gradient(to bottom right, transparent 50%, #dcdcdc 50%) 8px 8px / 32px 28px no-repeat, #fff; }
thead .active { background: #f1f1f1; color: #1d7044; border-bottom: 4px solid #217346; }
tr > :last-child { border-right: 0; }
.nums td:nth-child(n+4) { text-align: right; }
.nums td.text { text-align: left; }
.pagebreak {
  position: absolute;
  top: 44px;
  bottom: 0;
  width: 2px;
  background: repeating-linear-gradient(#999 0 5px, #fff 5px 8px);
}
.first { left: 986px; }
.second { left: 1896px; }

/* Sheet tabs */
.tabs {
  flex: none;
  height: 54px;
  display: flex;
  align-items: center;
  padding-left: 30px;
  background: linear-gradient(#efefef, #eaeaea);
  border-top: 2px solid #c8c8c8;
  border-bottom: 2px solid #989898;
}
.tabs button + button { margin-left: 32px; }
.tabs button.tab {
  align-self: flex-start;
  width: 160px;
  height: 46px;
  margin: -2px 0 0 30px;
  padding-top: 6px;
  border: 2px solid #c4c4c4;
  border-top: 0;
  border-radius: 0 0 8px 8px;
  background: #fff;
  color: #2f8556;
  font-size: 24px;
  font-weight: 700;
  box-shadow: 0 2px 1px #a8a8a8;
}
.tabs button.add { align-self: stretch; width: 76px; margin: 0 0 8px; padding-top: 4px; border-right: 2px solid #cdcdcd; }

.statusbar {
  flex: none;
  height: 44px;
  display: flex;
  align-items: center;
  padding: 0 48px;
  background: linear-gradient(#dedede, #bfbfbf);
  color: #4c4c4c;
  font-size: 24px;
}
.access { margin-left: 70px; gap: 2px; }
.view { width: 72px; height: 44px; }
.on { background: #999; }
.zoomer { display: flex; align-items: center; gap: 12px; margin: 0 36px 0 17px; }
input[type="range"] { appearance: none; width: 200px; height: 8px; border-radius: 4px; background: #8e8e8e; }
input[type="range"]::-webkit-slider-thumb {
  appearance: none;
  width: 32px;
  height: 32px;
  border-radius: 50%;
  background: linear-gradient(#f0f0f0, #fff);
  box-shadow: 0 1px 3px rgba(0, 0, 0, .4);
}

/* Dock */
.dock {
  flex: none;
  height: 82px;
  margin: 4px 47px 10px 46px;
  padding: 0 6px 0 5px;
  display: flex;
  align-items: center;
  border: 2px solid rgba(255, 215, 220, .45);
  border-radius: 22px;
  background: linear-gradient(90deg, #df949e 0, #d9949a 8%, #bf9485 17%, #c87f88 25%, #e58c97 34%, #dc8d86 40%, #bd7688 49%, #d97f90 54%, #df8099 60%, #c9939a 69%, #c58b99 75%, #dc90a9 82%, #dd8098 88%, #e08e8c 95%, #cc7c80 100%);
}
.defs { position: absolute; }
.dock a {
  position: relative;
  flex: 1;
  height: 78px;
  padding-bottom: 5px;
  display: flex;
  justify-content: center;
  align-items: center;
  text-decoration: none;
}
.dock a svg { width: 48px; height: 48px; overflow: visible; filter: drop-shadow(0 1px 1px rgba(0, 0, 0, .3)); }
.run::after {
  content: "";
  position: absolute;
  bottom: 3px;
  width: 6px;
  height: 6px;
  border-radius: 50%;
  background: #5a0a18;
}
.dock hr { flex: none; width: 2px; height: 58px; margin: 0 13px; border: 0; background: #a25263; }
.badge {
  position: absolute;
  top: 4px;
  right: 2px;
  width: 26px;
  height: 24px;
  border-radius: 12px;
  background: #f8423c;
  color: #fff;
  font-size: 12px;
  line-height: 24px;
  text-align: center;
}
.chip {
  position: absolute;
  bottom: 12px;
  left: 22px;
  padding: 0 4px;
  border-radius: 6px;
  background: #86505e;
  color: #fff;
  font-size: 12px;
  line-height: 16px;
}
.dock text { text-anchor: middle; font-family: Inter, sans-serif; fill: #fff; }
.dock .mar { font-size: 9px; font-weight: 600; }
.dock .thirteen { font-size: 25px; font-weight: 300; fill: #222; }
.dock .shield { font-size: 8px; font-weight: 700; }
.dock .tv { font-size: 17px; font-weight: 600; }
.dock .rlogo { font: 26px "Liberation Serif", serif; }
.dock .rsmall { font: 12px "Liberation Serif", serif; }
.dock .zm { font-size: 13px; font-weight: 600; }
.dock .heic { font-size: 8px; fill: #666; }
```
